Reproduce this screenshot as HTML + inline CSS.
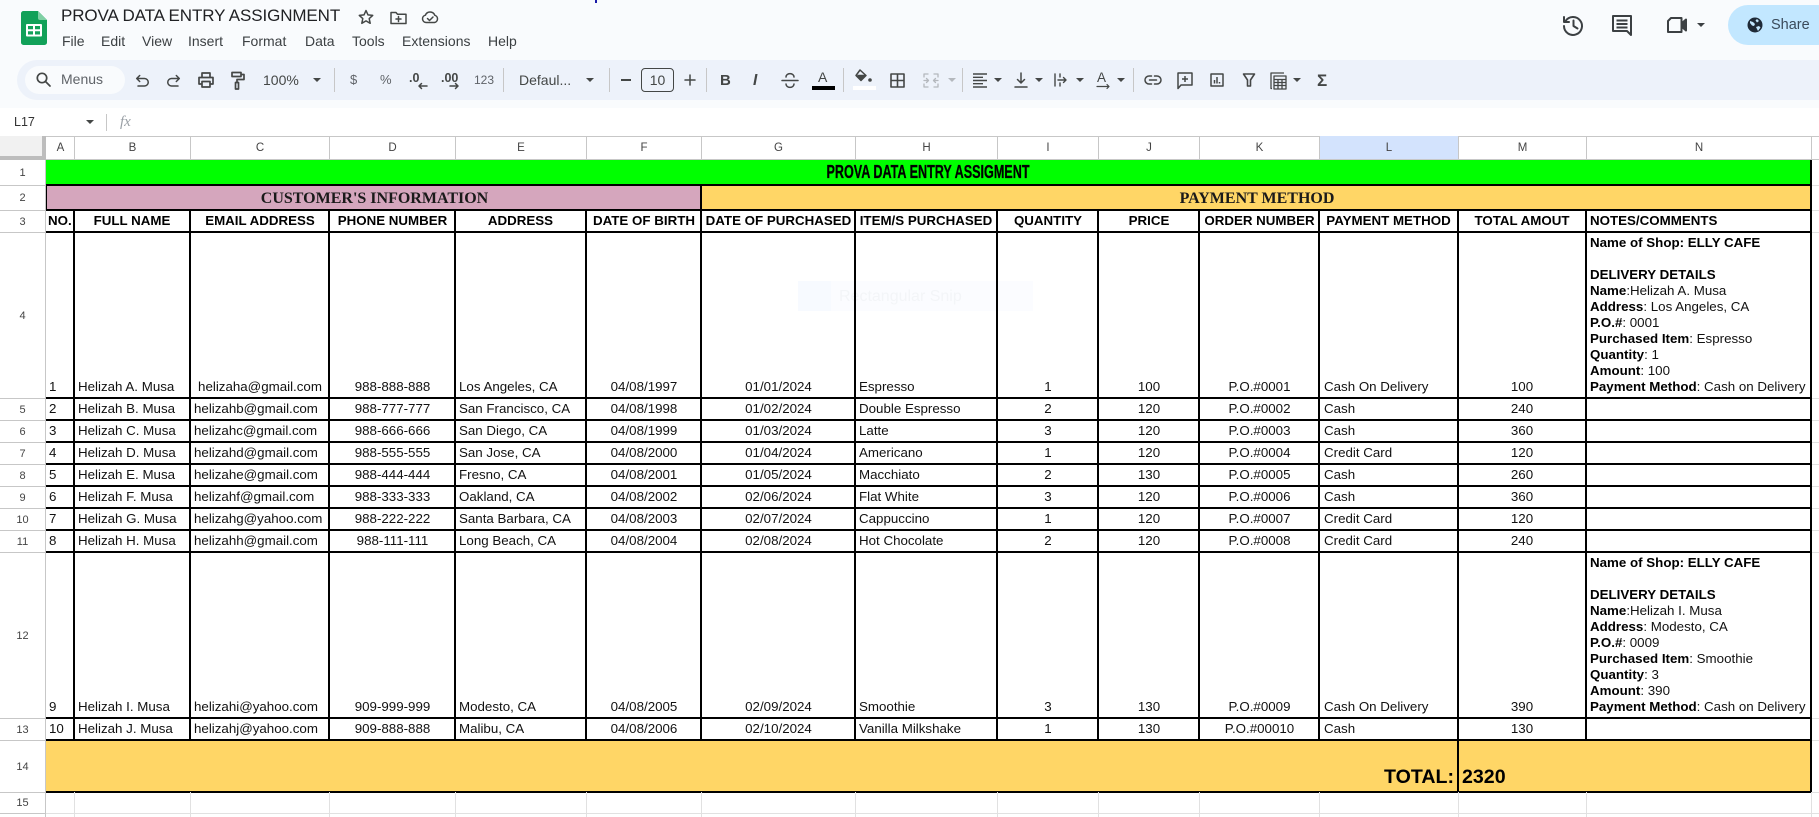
<!DOCTYPE html>
<html><head><meta charset="utf-8"><title>PROVA DATA ENTRY ASSIGNMENT</title>
<style>
html,body{margin:0;padding:0}
body{width:1819px;height:817px;position:relative;overflow:hidden;background:#fff;font-family:"Liberation Sans",Arial,sans-serif;color:#000}
div,span,svg{position:absolute}
.n{white-space:nowrap}
svg{fill:none;stroke:#444746;stroke-width:1.5;stroke-linecap:round;stroke-linejoin:round;overflow:visible}
.m{top:32px;font-size:14px;line-height:18px;color:#3c4043;white-space:nowrap}
.tb{font-size:14px;line-height:18px;color:#444746;white-space:nowrap}
.sep{width:1px;height:24px;top:68px;background:#c7c7c7}
.ar{width:0;height:0;border-left:4px solid transparent;border-right:4px solid transparent;border-top:4px solid #444746;top:78px}
.ch{top:136px;height:24px;line-height:25px;font-size:11.5px;color:#444;text-align:center;border-right:1px solid #c7c7c7;box-sizing:border-box;margin-left:1px}
.rh{left:0;width:45px;text-align:center;font-size:11px;color:#444;height:16px;line-height:16px;margin-top:1px}
.hl{left:0;width:46px;height:1px;background:#c7c7c7}
.k{left:46px;width:1765px;height:2px;background:#000}
.v{width:2px;background:#000;top:210px;height:530px}
.g{width:1px;background:#e1e1e1;top:792px;height:25px}
.rg{left:1812px;width:7px;height:1px;background:#e1e1e1}
.r{left:0;width:1819px;height:20px;line-height:20px;font-size:13.33px;color:#111;margin-top:1px}
.r span{white-space:nowrap;height:20px}
.a{left:49px;width:25px}
.b{left:78px;width:110px}
.c{left:194px;width:134px}
.cc{left:191px;width:138px;text-align:center}
.d{left:330px;width:125px;text-align:center}
.e{left:459px;width:126px}
.f{left:587px;width:114px;text-align:center}
.gg{left:702px;width:153px;text-align:center}
.h{left:859px;width:137px}
.i{left:998px;width:100px;text-align:center}
.j{left:1099px;width:100px;text-align:center}
.kk{left:1200px;width:119px;text-align:center}
.l{left:1324px;width:134px}
.mm{left:1459px;width:126px;text-align:center}
.no{left:1590px;width:218px}
.hd{font-weight:bold;color:#000}
.nt{left:1590px;width:218px;font-size:13.33px;line-height:16px;color:#111;white-space:nowrap;margin-top:1px}
.nt b{color:#000}
</style></head><body>

<!-- top chrome -->
<div style="left:0;top:0;width:1819px;height:108px;background:#f9fbfd"></div>
<div style="left:595px;top:0;width:2px;height:3px;background:#1a1aa8"></div>

<!-- sheets logo -->
<svg style="left:21px;top:11px;stroke:none" width="26" height="34" viewBox="0 0 26 34"><path d="M2.5 0H17l9 9v22.500a2.500 2.500 0 0 1-2.500 2.500h-21A2.500 2.500 0 0 1 0 31.500v-29A2.500 2.500 0 0 1 2.500 0z" fill="#12a159"/><path d="M17 0l9 9h-7a2 2 0 0 1-2-2z" fill="#7fd0a4"/><path d="M6 14h14v10.500H6z" fill="none" stroke="#fff" stroke-width="2"/><path d="M13 14v10.500M6 19.200h14" stroke="#fff" stroke-width="2"/></svg>

<div class="n" style="left:61px;top:5px;font-size:17px;line-height:22px;color:#202124;letter-spacing:-.1px">PROVA DATA ENTRY ASSIGNMENT</div>
<svg style="left:358px;top:9px" width="16" height="16" viewBox="0 0 16 16"><path d="M8 1.500l2 4.400 4.700.5-3.500 3.200 1 4.700L8 11.900 3.800 14.300l1-4.700L1.300 6.400 6 5.900z"/></svg>
<svg style="left:390px;top:10px" width="17" height="15" viewBox="0 0 17 15"><path d="M1 2.500h5l1.500 1.700H16V13.500H1zM8.500 6.500v5M6 9h5"/></svg>
<svg style="left:421px;top:9px" width="18" height="16" viewBox="0 0 18 16"><path d="M5 13.500a3.700 3.700 0 0 1-.6-7.300A5 5 0 0 1 13.800 6.300 3.700 3.700 0 0 1 13.500 13.500zM6.500 9.500l2 2 3.500-3.500"/></svg>

<div class="m" style="left:62px">File</div>
<div class="m" style="left:101px">Edit</div>
<div class="m" style="left:142px">View</div>
<div class="m" style="left:188px">Insert</div>
<div class="m" style="left:242px">Format</div>
<div class="m" style="left:305px">Data</div>
<div class="m" style="left:352px">Tools</div>
<div class="m" style="left:402px">Extensions</div>
<div class="m" style="left:488px">Help</div>

<!-- top right -->
<svg style="left:1561px;top:13px;stroke:#3c4043;stroke-width:2" width="24" height="24" viewBox="0 0 24 24"><path d="M4.500 8a9 9 0 1 1-1.500 5M3 4v5h5M12.500 7.500V13l4 2.500"/></svg>
<svg style="left:1611px;top:14px;stroke:#3c4043;stroke-width:2;stroke-linecap:butt" width="22" height="22" viewBox="0 0 22 22"><path d="M2 2h18v19l-4-4H2zM5.500 6.500h11M5.500 10h11M5.500 13.500h11"/></svg>
<svg style="left:1666px;top:15px;stroke:#3c4043;stroke-width:2" width="22" height="20" viewBox="0 0 22 20"><path d="M5 3h10.500v14H2V6z"/><path d="M15.500 8.500L20 4.500v11l-4.500-4z" fill="#3c4043"/></svg>
<div class="ar" style="left:1697px;top:23px;border-top-color:#3c4043"></div>
<div style="left:1728px;top:5px;width:110px;height:40px;border-radius:20px;background:#c2e7ff"></div>
<svg style="left:1747px;top:17px;stroke:none" width="16" height="16" viewBox="0 0 16 16"><circle cx="8" cy="8" r="7.500" fill="#1f2a37"/><path d="M3 4l3 1 2 2-1 2-2-.5-2-2.500zM9 10l3-1 1.500 1.500L11 14zM10 2l2 2-2 1.500-1.500-2z" fill="#c2e7ff"/></svg>
<div class="n" style="left:1771px;top:16px;font-size:14.500px;line-height:18px;color:#3a4a5a">Share</div>

<!-- toolbar -->
<div style="left:17px;top:60px;width:1840px;height:40px;border-radius:20px;background:#edf2fa"></div>
<div style="left:25px;top:66px;width:100px;height:28px;border-radius:14px;background:#f9fbfd"></div>
<svg style="left:35px;top:71px;stroke-width:1.700" width="17" height="17" viewBox="0 0 17 17"><circle cx="7" cy="7" r="4.700"/><path d="M10.500 10.500L15 15"/></svg>
<div class="tb" style="left:61px;top:70px;color:#5f6368">Menus</div>
<svg style="left:133px;top:72px" width="18" height="18" viewBox="0 0 18 18"><path d="M4 6.500h7.500a3.700 3.700 0 0 1 0 7.500H5M6.700 3.500L3.700 6.500l3 3"/></svg>
<svg style="left:165px;top:72px" width="18" height="18" viewBox="0 0 18 18"><path d="M14 6.500H6.500a3.700 3.700 0 0 0 0 7.500H13M11.300 3.500l3 3-3 3"/></svg>
<svg style="left:197px;top:71px;stroke-width:1.700" width="18" height="18" viewBox="0 0 18 18"><path d="M5 6V2h8v4M5 13H2V6.500h14V13h-3M5 10.500h8V16H5z"/></svg>
<svg style="left:231px;top:71px;stroke-width:1.700" width="16" height="20" viewBox="0 0 16 20"><path d="M1 1.500h9V5.500H1zM10 3.500h3V8.500H6v3M4.500 11.500h3V18h-3z"/></svg>
<div class="tb" style="left:263px;top:71px">100%</div>
<div class="ar" style="left:313px"></div>
<div class="sep" style="left:334px"></div>
<div class="tb" style="left:350px;top:71px;font-size:13px;color:#5f6368">$</div>
<div class="tb" style="left:380px;top:71px;font-size:13px;color:#5f6368">%</div>
<div class="tb" style="left:409px;top:69px;font-size:12.500px;font-weight:bold">.0</div>
<svg style="left:417px;top:82px" width="11" height="8" viewBox="0 0 11 8"><path d="M10 4H2M4.500 1.500L2 4l2.500 2.500"/></svg>
<div class="tb" style="left:441px;top:69px;font-size:12.500px;font-weight:bold">.00</div>
<svg style="left:449px;top:82px" width="11" height="8" viewBox="0 0 11 8"><path d="M1 4h8M6.500 1.500L9 4 6.500 6.500"/></svg>
<div class="tb" style="left:474px;top:71px;font-size:12px;color:#5f6368">123</div>
<div class="sep" style="left:503px"></div>
<div class="tb" style="left:519px;top:71px">Defaul...</div>
<div class="ar" style="left:586px"></div>
<div class="sep" style="left:609px"></div>
<div style="left:621px;top:79px;width:10px;height:2px;background:#444746"></div>
<div style="left:641px;top:68px;width:33px;height:24px;border:1px solid #444746;border-radius:4px;box-sizing:border-box;text-align:center;font-size:14px;line-height:23px;color:#444746">10</div>
<svg style="left:684px;top:74px" width="12" height="12" viewBox="0 0 12 12"><path d="M1 6h10M6 1v10"/></svg>
<div class="sep" style="left:706px"></div>
<div class="tb" style="left:720px;top:72px;font-size:15px;font-weight:bold">B</div>
<div class="tb" style="left:753px;top:72px;font-size:15.500px;font-style:italic;font-weight:bold">I</div>
<svg style="left:781px;top:72px" width="18" height="17" viewBox="0 0 18 17"><path d="M1 8.500h16M5 5a3.500 3 0 0 1 8 0M5 12a3.500 3 0 0 0 8 0"/></svg>
<div class="tb" style="left:818px;top:68px;font-size:14px">A</div>
<div style="left:812px;top:86px;width:23px;height:4px;background:#000"></div>
<div class="sep" style="left:843px"></div>
<svg style="left:855px;top:69px" width="18" height="17" viewBox="0 0 18 17"><path d="M5 1l6 5.500-5 5-5-5zM3 6.500h8" /><path d="M2 7h9l-5 5z" fill="#444746" stroke="none"/><circle cx="15" cy="11" r="1.800" fill="#444746" stroke="none"/></svg>
<div style="left:853px;top:86px;width:23px;height:4px;background:#fff"></div>
<svg style="left:890px;top:73px;stroke-width:1.600;stroke-linecap:butt" width="15" height="15" viewBox="0 0 15 15"><path d="M1 1h13v13H1zM7.500 1v13M1 7.500h13"/></svg>
<svg style="left:923px;top:73px;stroke:#b4b8bd;stroke-width:1.300" width="16" height="15" viewBox="0 0 16 15"><path d="M1 4V1h4M1 11v3h4M15 4V1h-4M15 11v3h-4M1 7.500h4M3.500 5.500l2 2-2 2M15 7.500h-4M12.500 5.500l-2 2 2 2"/></svg>
<div class="ar" style="left:948px;border-top-color:#b4b8bd"></div>
<div class="sep" style="left:962px"></div>
<svg style="left:973px;top:73px;stroke-width:1.400;stroke-linecap:butt" width="14" height="15" viewBox="0 0 14 15"><path d="M0 1h14M0 4.300h10M0 7.500h14M0 10.700h10M0 14h14"/></svg>
<div class="ar" style="left:994px"></div>
<svg style="left:1014px;top:72px;stroke-width:1.500" width="14" height="16" viewBox="0 0 14 16"><path d="M1 15h12M7 1v10M3.500 7.500L7 11l3.500-3.500"/></svg>
<div class="ar" style="left:1035px"></div>
<svg style="left:1054px;top:73px;stroke-width:1.400" width="14" height="14" viewBox="0 0 14 14"><path d="M1 1v12M6 1v3M6 10v3M4 7h8M9.500 4.500L12 7 9.500 9.500"/></svg>
<div class="ar" style="left:1076px"></div>
<div class="tb" style="left:1097px;top:69px;font-size:13.500px">A</div>
<svg style="left:1097px;top:84px;stroke-width:1.200" width="14" height="7" viewBox="0 0 14 7"><path d="M0 2.500h12M10 .5l2 2-2 2"/></svg>
<div class="ar" style="left:1117px"></div>
<div class="sep" style="left:1133px"></div>
<svg style="left:1144px;top:74px;stroke-width:1.500" width="18" height="12" viewBox="0 0 18 12"><path d="M7.500 2H5a4 4 0 0 0 0 8h2.500M10.500 2H13a4 4 0 0 1 0 8h-2.500M5.500 6h7"/></svg>
<svg style="left:1177px;top:72px;stroke-width:1.500;stroke-linecap:butt" width="16" height="18" viewBox="0 0 16 18"><path d="M1 1h14v12H4l-3 3.500zM8 4v6M5 7h6"/></svg>
<svg style="left:1210px;top:73px;stroke-width:1.500;stroke-linecap:butt" width="14" height="14" viewBox="0 0 14 14"><path d="M1 1h12v12H1zM4.500 10.500V7M7 10.500V4M9.500 10.500V9"/></svg>
<svg style="left:1243px;top:73px;stroke-width:1.600;stroke-linecap:butt" width="12" height="14" viewBox="0 0 12 14"><path d="M.5 1h11L7.500 7v6H4.500V7z"/></svg>
<svg style="left:1270px;top:72px;stroke-width:1.300;stroke-linecap:butt" width="17" height="18" viewBox="0 0 17 18"><path d="M2 16.500H1V1h13M4 4h12v13H4zM4 7.500h12M4 10.500h12M4 13.500h12M8 7.500V17M12 7.500V17"/></svg>
<div class="ar" style="left:1293px"></div>
<div class="tb" style="left:1317px;top:72px;font-size:17px;font-weight:bold">Σ</div>

<!-- formula bar -->
<div class="n" style="left:14px;top:114px;font-size:12.500px;line-height:16px;color:#333">L17</div>
<div class="ar" style="left:86px;top:120px"></div>
<div style="left:106px;top:114px;width:1px;height:17px;background:#c7c7c7"></div>
<div class="n" style="left:120px;top:114px;font-size:15px;line-height:17px;font-family:'Liberation Serif';font-style:italic;color:#9aa0a6">fx</div>

<!-- headers -->
<div style="left:0;top:136px;width:1819px;height:1px;background:#c7c7c7"></div>
<div style="left:0;top:136px;width:46px;height:24px;background:#f1f1f1;border-right:4px solid #bdbdbd;border-bottom:4px solid #bdbdbd;box-sizing:border-box"></div>
<div class="ch" style="left:46px;width:28px">A</div>
<div class="ch" style="left:74px;width:116px">B</div>
<div class="ch" style="left:190px;width:139px">C</div>
<div class="ch" style="left:329px;width:126px">D</div>
<div class="ch" style="left:455px;width:131px">E</div>
<div class="ch" style="left:586px;width:115px">F</div>
<div class="ch" style="left:701px;width:154px">G</div>
<div class="ch" style="left:855px;width:142px">H</div>
<div class="ch" style="left:997px;width:101px">I</div>
<div class="ch" style="left:1098px;width:101px">J</div>
<div class="ch" style="left:1199px;width:120px">K</div>
<div class="ch" style="left:1319px;width:139px;background:#d3e3fd">L</div>
<div class="ch" style="left:1458px;width:128px">M</div>
<div class="ch" style="left:1586px;width:225px">N</div>
<div style="left:46px;top:159px;width:1773px;height:1px;background:#c7c7c7"></div>

<div style="left:45px;top:160px;width:1px;height:657px;background:#c7c7c7"></div>
<div class="hl" style="top:185px"></div><div class="hl" style="top:210px"></div><div class="hl" style="top:232px"></div><div class="hl" style="top:398px"></div><div class="hl" style="top:420px"></div><div class="hl" style="top:442px"></div><div class="hl" style="top:464px"></div><div class="hl" style="top:486px"></div><div class="hl" style="top:508px"></div><div class="hl" style="top:530px"></div><div class="hl" style="top:552px"></div><div class="hl" style="top:718px"></div><div class="hl" style="top:740px"></div><div class="hl" style="top:792px"></div><div class="hl" style="top:813px"></div>
<div class="rh" style="top:164px">1</div><div class="rh" style="top:189px">2</div><div class="rh" style="top:213px">3</div><div class="rh" style="top:307px">4</div><div class="rh" style="top:401px">5</div><div class="rh" style="top:423px">6</div><div class="rh" style="top:445px">7</div><div class="rh" style="top:467px">8</div><div class="rh" style="top:489px">9</div><div class="rh" style="top:511px">10</div><div class="rh" style="top:533px">11</div><div class="rh" style="top:627px">12</div><div class="rh" style="top:721px">13</div><div class="rh" style="top:758px">14</div><div class="rh" style="top:794px">15</div>

<!-- fills -->
<div style="left:46px;top:160px;width:1765px;height:25px;background:#00ff00"></div>
<div style="left:46px;top:185px;width:655px;height:25px;background:#d5a6bd"></div>
<div style="left:701px;top:185px;width:1110px;height:25px;background:#ffd666"></div>
<div style="left:46px;top:740px;width:1765px;height:52px;background:#ffd666"></div>

<!-- ghost snip -->
<div style="left:798px;top:281px;width:235px;height:30px;background:#fbfcff"></div>
<div style="left:798px;top:281px;width:33px;height:30px;background:#f7faff"></div>
<div class="n" style="left:839px;top:288px;font-size:16px;line-height:18px;color:#f3f5f8">Rectangular Snip</div>

<!-- grid lines -->
<div class="k" style="top:184px"></div><div class="k" style="top:209px"></div><div class="k" style="top:231px"></div><div class="k" style="top:397px"></div><div class="k" style="top:419px"></div><div class="k" style="top:441px"></div><div class="k" style="top:463px"></div><div class="k" style="top:485px"></div><div class="k" style="top:507px"></div><div class="k" style="top:529px"></div><div class="k" style="top:551px"></div><div class="k" style="top:717px"></div><div class="k" style="top:739px"></div><div class="k" style="top:791px"></div>
<div style="left:46px;top:185px;width:1px;height:25px;background:#000"></div>
<div class="v" style="left:73px"></div><div class="v" style="left:189px"></div><div class="v" style="left:328px"></div><div class="v" style="left:454px"></div><div class="v" style="left:585px"></div><div class="v" style="left:700px;top:185px;height:555px"></div><div class="v" style="left:854px"></div><div class="v" style="left:996px"></div><div class="v" style="left:1097px"></div><div class="v" style="left:1198px"></div><div class="v" style="left:1318px"></div><div class="v" style="left:1457px;height:582px"></div><div class="v" style="left:1585px"></div><div class="v" style="left:1810px;top:160px;height:633px"></div>

<div class="g" style="left:74px"></div><div class="g" style="left:190px"></div><div class="g" style="left:329px"></div><div class="g" style="left:455px"></div><div class="g" style="left:586px"></div><div class="g" style="left:701px"></div><div class="g" style="left:855px"></div><div class="g" style="left:997px"></div><div class="g" style="left:1098px"></div><div class="g" style="left:1199px"></div><div class="g" style="left:1319px"></div><div class="g" style="left:1458px"></div><div class="g" style="left:1586px"></div><div class="g" style="left:1811px"></div>
<div style="left:46px;top:813px;width:1773px;height:1px;background:#e1e1e1"></div>
<div class="rg" style="top:185px"></div><div class="rg" style="top:210px"></div><div class="rg" style="top:232px"></div><div class="rg" style="top:398px"></div><div class="rg" style="top:420px"></div><div class="rg" style="top:442px"></div><div class="rg" style="top:464px"></div><div class="rg" style="top:486px"></div><div class="rg" style="top:508px"></div><div class="rg" style="top:530px"></div><div class="rg" style="top:552px"></div><div class="rg" style="top:718px"></div><div class="rg" style="top:740px"></div><div class="rg" style="top:792px"></div>

<!-- titles -->
<div class="n" style="left:46px;width:1765px;top:160px;height:24px;text-align:center;line-height:24px;font-size:18px;font-weight:bold;color:#000;-webkit-text-stroke:.3px #000"><span style="position:static;display:inline-block;transform:scaleX(.7)">PROVA DATA ENTRY ASSIGMENT</span></div>
<div class="n" style="left:47px;width:655px;top:187px;height:23px;text-align:center;line-height:23px;font-size:16px;font-weight:bold;font-family:'Liberation Serif',serif;color:#1a1a1a">CUSTOMER'S INFORMATION</div>
<div class="n" style="left:702px;width:1110px;top:187px;height:23px;text-align:center;line-height:23px;font-size:16px;font-weight:bold;font-family:'Liberation Serif',serif;color:#1a1a1a">PAYMENT METHOD</div>

<!-- row 3 -->
<div class="r hd" style="top:210px"><span class="a" style="left:48px">NO.</span><span style="left:75px;width:114px;text-align:center">FULL NAME</span><span class="cc">EMAIL ADDRESS</span><span class="d">PHONE NUMBER</span><span style="left:456px;width:129px;text-align:center">ADDRESS</span><span class="f">DATE OF BIRTH</span><span class="gg">DATE OF PURCHASED</span><span style="left:856px;width:140px;text-align:center">ITEM/S PURCHASED</span><span class="i">QUANTITY</span><span class="j">PRICE</span><span class="kk">ORDER NUMBER</span><span style="left:1320px;width:137px;text-align:center">PAYMENT METHOD</span><span class="mm">TOTAL AMOUT</span><span class="no">NOTES/COMMENTS</span></div>

<!-- data -->
<div class="r" style="top:376px"><span class="a">1</span><span class="b">Helizah A. Musa</span><span class="cc" style="left:191px">helizaha@gmail.com</span><span class="d">988-888-888</span><span class="e">Los Angeles, CA</span><span class="f">04/08/1997</span><span class="gg">01/01/2024</span><span class="h">Espresso</span><span class="i">1</span><span class="j">100</span><span class="kk">P.O.#0001</span><span class="l">Cash On Delivery</span><span class="mm">100</span></div>
<div class="r" style="top:398px"><span class="a">2</span><span class="b">Helizah B. Musa</span><span class="c">helizahb@gmail.com</span><span class="d">988-777-777</span><span class="e">San Francisco, CA</span><span class="f">04/08/1998</span><span class="gg">01/02/2024</span><span class="h">Double Espresso</span><span class="i">2</span><span class="j">120</span><span class="kk">P.O.#0002</span><span class="l">Cash</span><span class="mm">240</span></div>
<div class="r" style="top:420px"><span class="a">3</span><span class="b">Helizah C. Musa</span><span class="c">helizahc@gmail.com</span><span class="d">988-666-666</span><span class="e">San Diego, CA</span><span class="f">04/08/1999</span><span class="gg">01/03/2024</span><span class="h">Latte</span><span class="i">3</span><span class="j">120</span><span class="kk">P.O.#0003</span><span class="l">Cash</span><span class="mm">360</span></div>
<div class="r" style="top:442px"><span class="a">4</span><span class="b">Helizah D. Musa</span><span class="c">helizahd@gmail.com</span><span class="d">988-555-555</span><span class="e">San Jose, CA</span><span class="f">04/08/2000</span><span class="gg">01/04/2024</span><span class="h">Americano</span><span class="i">1</span><span class="j">120</span><span class="kk">P.O.#0004</span><span class="l">Credit Card</span><span class="mm">120</span></div>
<div class="r" style="top:464px"><span class="a">5</span><span class="b">Helizah E. Musa</span><span class="c">helizahe@gmail.com</span><span class="d">988-444-444</span><span class="e">Fresno, CA</span><span class="f">04/08/2001</span><span class="gg">01/05/2024</span><span class="h">Macchiato</span><span class="i">2</span><span class="j">130</span><span class="kk">P.O.#0005</span><span class="l">Cash</span><span class="mm">260</span></div>
<div class="r" style="top:486px"><span class="a">6</span><span class="b">Helizah F. Musa</span><span class="c">helizahf@gmail.com</span><span class="d">988-333-333</span><span class="e">Oakland, CA</span><span class="f">04/08/2002</span><span class="gg">02/06/2024</span><span class="h">Flat White</span><span class="i">3</span><span class="j">120</span><span class="kk">P.O.#0006</span><span class="l">Cash</span><span class="mm">360</span></div>
<div class="r" style="top:508px"><span class="a">7</span><span class="b">Helizah G. Musa</span><span class="c">helizahg@yahoo.com</span><span class="d">988-222-222</span><span class="e">Santa Barbara, CA</span><span class="f">04/08/2003</span><span class="gg">02/07/2024</span><span class="h">Cappuccino</span><span class="i">1</span><span class="j">120</span><span class="kk">P.O.#0007</span><span class="l">Credit Card</span><span class="mm">120</span></div>
<div class="r" style="top:530px"><span class="a">8</span><span class="b">Helizah H. Musa</span><span class="c">helizahh@gmail.com</span><span class="d">988-111-111</span><span class="e">Long Beach, CA</span><span class="f">04/08/2004</span><span class="gg">02/08/2024</span><span class="h">Hot Chocolate</span><span class="i">2</span><span class="j">120</span><span class="kk">P.O.#0008</span><span class="l">Credit Card</span><span class="mm">240</span></div>
<div class="r" style="top:696px"><span class="a">9</span><span class="b">Helizah I. Musa</span><span class="c">helizahi@yahoo.com</span><span class="d">909-999-999</span><span class="e">Modesto, CA</span><span class="f">04/08/2005</span><span class="gg">02/09/2024</span><span class="h">Smoothie</span><span class="i">3</span><span class="j">130</span><span class="kk">P.O.#0009</span><span class="l">Cash On Delivery</span><span class="mm">390</span></div>
<div class="r" style="top:718px"><span class="a">10</span><span class="b">Helizah J. Musa</span><span class="c">helizahj@yahoo.com</span><span class="d">909-888-888</span><span class="e">Malibu, CA</span><span class="f">04/08/2006</span><span class="gg">02/10/2024</span><span class="h">Vanilla Milkshake</span><span class="i">1</span><span class="j">130</span><span class="kk">P.O.#00010</span><span class="l">Cash</span><span class="mm">130</span></div>

<!-- notes -->
<div class="nt" style="top:234px"><b>Name of Shop: ELLY CAFE</b><br><br><b>DELIVERY DETAILS</b><br><b>Name</b>:Helizah A. Musa<br><b>Address</b>: Los Angeles, CA<br><b>P.O.#</b>: 0001<br><b>Purchased Item</b>: Espresso<br><b>Quantity</b>: 1<br><b>Amount</b>: 100<br><b>Payment Method</b>: Cash on Delivery</div>
<div class="nt" style="top:554px"><b>Name of Shop: ELLY CAFE</b><br><br><b>DELIVERY DETAILS</b><br><b>Name</b>:Helizah I. Musa<br><b>Address</b>: Modesto, CA<br><b>P.O.#</b>: 0009<br><b>Purchased Item</b>: Smoothie<br><b>Quantity</b>: 3<br><b>Amount</b>: 390<br><b>Payment Method</b>: Cash on Delivery</div>

<!-- total -->
<div class="n" style="left:1300px;width:154px;top:765px;height:24px;line-height:24px;text-align:right;font-size:19.600px;font-weight:bold;color:#000">TOTAL:</div>
<div class="n" style="left:1462px;top:765px;height:24px;line-height:24px;font-size:19.600px;font-weight:bold;color:#000">2320</div>

</body></html>
